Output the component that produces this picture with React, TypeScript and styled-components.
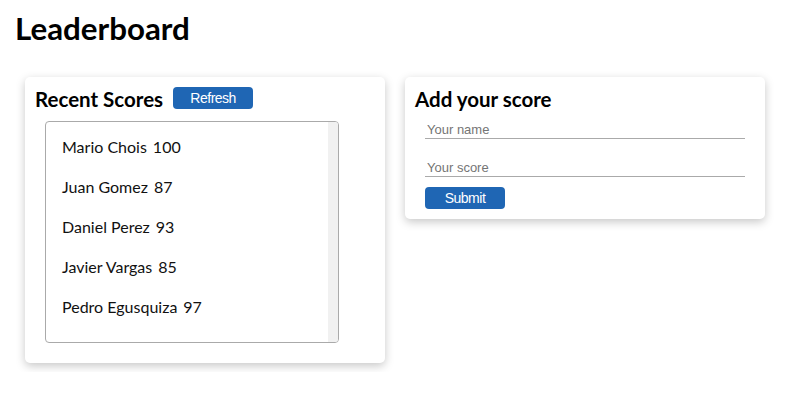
import styled, { createGlobalStyle } from 'styled-components';

const GlobalStyle = createGlobalStyle`
  body {
    margin: 0;
    background: #fff;
    font-family: Lato, 'Liberation Sans', sans-serif;
    color: #000;
  }
`;

const Page = styled.div`
  padding: 9px 15px;
`;

const Title = styled.h1`
  margin: 0 0 30px;
  font-size: 31.3px;
  font-weight: 700;
  line-height: 38px;
`;

const Boards = styled.div`
  display: flex;
  align-items: flex-start;
  gap: 20px;
  padding-left: 10px;
`;

const Card = styled.section`
  width: 360px;
  box-sizing: border-box;
  padding: 10px;
  background: #fff;
  border-radius: 5px;
  box-shadow: 0 3px 10px rgba(0, 0, 0, 0.22);
`;

const CardHeader = styled.div`
  display: flex;
  align-items: flex-start;
  gap: 10px;
`;

const CardTitle = styled.h2`
  margin: 0;
  font-size: 20.5px;
  font-weight: 700;
  line-height: 24px;
`;

const Button = styled.button`
  width: 80px;
  height: 22px;
  padding: 0;
  border: none;
  border-radius: 4px;
  background: #1f66b4;
  color: #fff;
  font-family: 'Liberation Sans', Arial, sans-serif;
  font-size: 14px;
  letter-spacing: -0.5px;
  cursor: pointer;
`;

const ListBox = styled.div`
  display: flex;
  width: 294px;
  height: 222px;
  box-sizing: border-box;
  margin: 10px 0 10px 10px;
  border: 1px solid #aaa;
  border-radius: 4px;
  overflow: hidden;
`;

const ScoreList = styled.ul`
  flex: 1;
  list-style: none;
  margin: 0;
  padding: 5px 16px;
`;

const ScrollTrack = styled.div`
  width: 10px;
  background: #f1f1f1;
`;

const ScoreItem = styled.li`
  display: flex;
  gap: 6px;
  font-size: 16px;
  line-height: 40px;
  color: #111;
`;

const Form = styled.form`
  display: flex;
  flex-direction: column;
  align-items: flex-start;
  margin: 10px 0 0 10px;
`;

const Field = styled.input`
  display: block;
  width: 320px;
  height: 18px;
  box-sizing: border-box;
  margin-bottom: 20px;
  padding: 1px 2px;
  border: none;
  border-bottom: 1px solid #aaa;
  font-family: 'Liberation Sans', Arial, sans-serif;
  font-size: 13px;
  outline: none;

  &::placeholder {
    color: #757575;
  }

  &:last-of-type {
    margin-bottom: 10px;
  }
`;

const scores = [
  { name: 'Mario Chois', score: 100 },
  { name: 'Juan Gomez', score: 87 },
  { name: 'Daniel Perez', score: 93 },
  { name: 'Javier Vargas', score: 85 },
  { name: 'Pedro Egusquiza', score: 97 },
];

function App() {
  return (
    <Page>
      <GlobalStyle />
      <Title>Leaderboard</Title>
      <Boards>
        <Card>
          <CardHeader>
            <CardTitle>Recent Scores</CardTitle>
            <Button type="button">Refresh</Button>
          </CardHeader>
          <ListBox>
            <ScoreList>
              {scores.map((s) => (
                <ScoreItem key={s.name}>
                  <span>{s.name}</span>
                  <span>{s.score}</span>
                </ScoreItem>
              ))}
            </ScoreList>
            <ScrollTrack />
          </ListBox>
        </Card>
        <Card>
          <CardTitle>Add your score</CardTitle>
          <Form onSubmit={(e) => e.preventDefault()}>
            <Field type="text" placeholder="Your name" />
            <Field type="text" placeholder="Your score" />
            <Button type="submit">Submit</Button>
          </Form>
        </Card>
      </Boards>
    </Page>
  );
}

export default App;
